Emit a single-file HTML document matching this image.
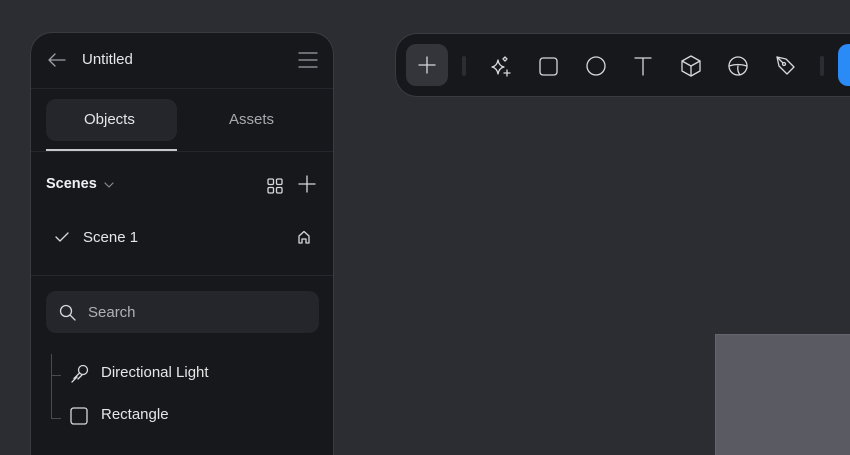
<!DOCTYPE html>
<html><head><meta charset="utf-8">
<style>
*{box-sizing:border-box;margin:0;padding:0}
html,body{width:850px;height:455px;overflow:hidden}
body{background:#2c2d32;font-family:"Liberation Sans",sans-serif;position:relative}
.panel{position:absolute;left:30px;top:32px;width:304px;height:423px;background:#17181c;border:1px solid #3a3b40;border-bottom:none;border-radius:22px 22px 0 0;overflow:hidden}
.t{position:absolute;color:#e6e6e8;font-size:15px;white-space:nowrap}
.line{position:absolute;height:1px;background:#26272c;left:0;right:0}
svg{position:absolute;overflow:visible}
.ic{fill:none;stroke:#d8d8dc;stroke-width:1.3;stroke-linecap:round;stroke-linejoin:round}
.tb{position:absolute;left:395px;top:33px;width:455px;height:64px;background:#17181c;border:1px solid #3a3b40;border-right:none;border-radius:22px 0 0 22px;overflow:hidden}
</style></head><body>
<div class="panel">
  <svg class="ic" style="left:16px;top:20px" width="20" height="14"><path d="M2 7H18M2 7L8 1M2 7L8 13" style="stroke:#a0a0a6"/></svg>
  <div class="t" style="left:51px;top:18px">Untitled</div>
  <svg class="ic" style="left:267px;top:18px" width="20" height="18"><path d="M1 2H19M1 9H19M1 16H19" style="stroke:#a0a0a6"/></svg>
  <div class="line" style="top:55px"></div>
  <div style="position:absolute;left:15px;top:66px;width:131px;height:42px;background:#25262b;border-radius:10px"></div>
  <div class="t" style="left:53px;top:78px">Objects</div>
  <div class="t" style="left:198px;top:78px;color:#a8a8ae">Assets</div>
  <div style="position:absolute;left:15px;top:116px;width:131px;height:2px;background:#c8c8cc"></div>
  <div class="line" style="top:118px"></div>
  <div class="t" style="left:15px;top:143px;font-weight:bold;font-size:14.5px;color:#f0f0f2">Scenes</div>
  <svg class="ic" style="left:73px;top:149px" width="10" height="6"><path d="M1 1L5 5L9 1" style="stroke:#8a8a90;stroke-width:1.2"/></svg>
  <svg class="ic" style="left:236px;top:145px" width="16" height="16"><rect x="1" y="1" width="5.5" height="5.5" rx="1.2"/><rect x="9.5" y="1" width="5.5" height="5.5" rx="1.2"/><rect x="1" y="9.5" width="5.5" height="5.5" rx="1.2"/><rect x="9.5" y="9.5" width="5.5" height="5.5" rx="1.2"/></svg>
  <svg class="ic" style="left:267px;top:142px" width="18" height="18"><path d="M9 1V17M1 9H17"/></svg>
  <svg class="ic" style="left:24px;top:199px" width="14" height="10"><path d="M1 5L5 9L13 1"/></svg>
  <div class="t" style="left:52px;top:196px">Scene 1</div>
  <svg class="ic" style="left:266px;top:197px" width="14" height="14"><path d="M2 13V6L7 1.5L12 6V13H9V9H5V13Z"/></svg>
  <div class="line" style="top:242px"></div>
  <div style="position:absolute;left:15px;top:258px;width:273px;height:42px;background:#25262b;border-radius:10px"></div>
  <svg class="ic" style="left:28px;top:271px" width="18" height="18"><circle cx="7" cy="7" r="5.5"/><path d="M11 11L16 16"/></svg>
  <div class="t" style="left:57px;top:271px;color:#b0b0b6">Search</div>
  <div style="position:absolute;left:20px;top:321px;width:1px;height:65px;background:#4a4b50"></div>
  <div style="position:absolute;left:20px;top:342px;width:10px;height:1px;background:#4a4b50"></div>
  <div style="position:absolute;left:20px;top:385px;width:10px;height:1px;background:#4a4b50"></div>
  <svg class="ic" style="left:38px;top:330px" width="22" height="22"><circle cx="14" cy="7" r="4.5"/><path d="M10.5 10L5 15.5M8 14L3 19M13 12L9 16"/></svg>
  <div class="t" style="left:70px;top:331px">Directional Light</div>
  <svg class="ic" style="left:39px;top:374px" width="18" height="18"><rect x="1" y="1" width="16" height="16" rx="2.5"/></svg>
  <div class="t" style="left:70px;top:373px">Rectangle</div>
</div>
<div class="tb">
  <div style="position:absolute;left:10px;top:10px;width:42px;height:42px;background:#34353a;border-radius:10px"></div>
  <svg class="ic" style="left:23px;top:23px" width="16" height="16"><path d="M8 0V16M0 8H16"/></svg>
  <div style="position:absolute;left:66px;top:22px;width:4px;height:20px;background:#2c2d32;border-radius:2px"></div>
  <svg class="ic" style="left:94px;top:22px" width="22" height="22"><path d="M8 4Q9 10 14 11Q9 12 8 18Q7 12 2 11Q7 10 8 4Z"/><path d="M15 1L17 3L15 5L13 3Z"/><path d="M17 14V20M14 17H20"/></svg>
  <svg class="ic" style="left:143px;top:23px" width="18" height="18"><rect x="1" y="1" width="17" height="17" rx="3"/></svg>
  <svg class="ic" style="left:190px;top:22px" width="20" height="20"><circle cx="10" cy="10" r="9"/></svg>
  <svg class="ic" style="left:238px;top:23px" width="18" height="18"><path d="M1 1H17M9 1V18"/></svg>
  <svg class="ic" style="left:285px;top:21px" width="20" height="22"><path d="M10 1L19 6V16L10 21L1 16V6Z"/><path d="M1 6L10 11L19 6M10 11V21"/></svg>
  <svg class="ic" style="left:332px;top:22px" width="20" height="20"><circle cx="10" cy="10" r="9"/><path d="M1 10Q10 7 19 10M10 10Q9 15 12 19"/></svg>
  <svg class="ic" style="left:379px;top:21px" width="22" height="22"><path d="M2 2L11 4L19 12L12 19L4 11Z"/><path d="M2 2L8 8"/><circle cx="9" cy="9" r="1.5"/></svg>
  <div style="position:absolute;left:424px;top:22px;width:4px;height:20px;background:#2c2d32;border-radius:2px"></div>
  <div style="position:absolute;left:442px;top:10px;width:30px;height:42px;background:#2a8af6;border-radius:10px"></div>
</div>
<div style="position:absolute;left:715px;top:334px;width:135px;height:121px;background:#5a5a62;border-top:1px solid #66666e;border-left:1px solid #66666e"></div>
</body></html>
